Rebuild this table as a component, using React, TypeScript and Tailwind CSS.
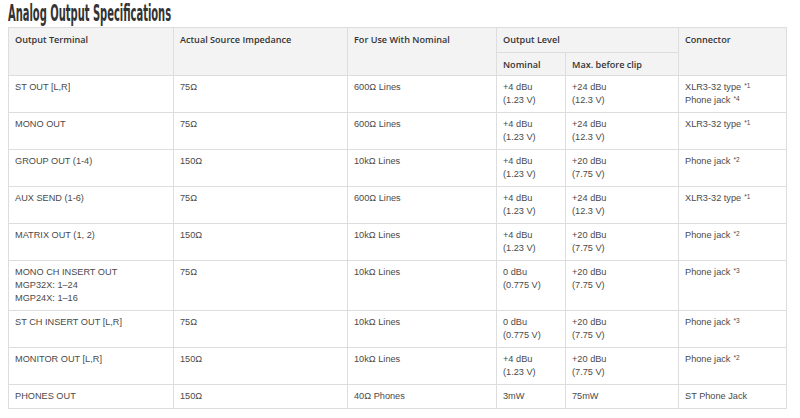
const rows = [
  { term: ["ST OUT [L,R]"], imp: "75Ω", use: "600Ω Lines", nom: ["+4 dBu", "(1.23 V)"], max: ["+24 dBu", "(12.3 V)"], conn: [["XLR3-32 type", "*1"], ["Phone jack", "*4"]] },
  { term: ["MONO OUT"], imp: "75Ω", use: "600Ω Lines", nom: ["+4 dBu", "(1.23 V)"], max: ["+24 dBu", "(12.3 V)"], conn: [["XLR3-32 type", "*1"]] },
  { term: ["GROUP OUT (1-4)"], imp: "150Ω", use: "10kΩ Lines", nom: ["+4 dBu", "(1.23 V)"], max: ["+20 dBu", "(7.75 V)"], conn: [["Phone jack", "*2"]] },
  { term: ["AUX SEND (1-6)"], imp: "75Ω", use: "600Ω Lines", nom: ["+4 dBu", "(1.23 V)"], max: ["+24 dBu", "(12.3 V)"], conn: [["XLR3-32 type", "*1"]] },
  { term: ["MATRIX OUT (1, 2)"], imp: "150Ω", use: "10kΩ Lines", nom: ["+4 dBu", "(1.23 V)"], max: ["+20 dBu", "(7.75 V)"], conn: [["Phone jack", "*2"]] },
  { term: ["MONO CH INSERT OUT", "MGP32X: 1–24", "MGP24X: 1–16"], imp: "75Ω", use: "10kΩ Lines", nom: ["0 dBu", "(0.775 V)"], max: ["+20 dBu", "(7.75 V)"], conn: [["Phone jack", "*3"]] },
  { term: ["ST CH INSERT OUT [L,R]"], imp: "75Ω", use: "10kΩ Lines", nom: ["0 dBu", "(0.775 V)"], max: ["+20 dBu", "(7.75 V)"], conn: [["Phone jack", "*3"]] },
  { term: ["MONITOR OUT [L,R]"], imp: "150Ω", use: "10kΩ Lines", nom: ["+4 dBu", "(1.23 V)"], max: ["+20 dBu", "(7.75 V)"], conn: [["Phone jack", "*2"]] },
  { term: ["PHONES OUT"], imp: "150Ω", use: "40Ω Phones", nom: ["3mW"], max: ["75mW"], conn: [["ST Phone Jack", ""]] },
];

const th = "border border-[#dddddd] bg-[#f3f3f3] px-[6px] pt-[5px] pb-[4px] text-left align-top font-semibold text-[9.1px] leading-[13px] text-[#333333]";
const td = "border border-[#dddddd] px-[6px] pt-[5px] pb-[5px] align-top";

const Lines = ({ items }: { items: string[] }) => (
  <>
    {items.map((t, i) => (
      <div key={i}>{t}</div>
    ))}
  </>
);

export default function App() {
  return (
    <div className="w-[800px] h-[418px] bg-white overflow-hidden">
      <div className="pl-[8px] h-[27px]">
        <h2 className="origin-left scale-x-[0.48] whitespace-nowrap font-bold text-[23px] leading-[26px] text-[#333333] font-['DejaVu_Sans_Condensed','Liberation_Sans_Narrow',sans-serif]">
          Analog Output Specifications
        </h2>
      </div>
      <table className="ml-[8px] w-[778px] table-fixed border-collapse text-[9.2px] leading-[13px] text-[#4a4a4a] font-['Liberation_Sans',Arial,sans-serif]">
        <colgroup>
          <col className="w-[165px]" />
          <col className="w-[174px]" />
          <col className="w-[149px]" />
          <col className="w-[69px]" />
          <col className="w-[113px]" />
          <col className="w-[108px]" />
        </colgroup>
        <thead className="font-['Open_Sans',sans-serif]">
          <tr className="h-[25px]">
            <th rowSpan={2} className={th}>Output Terminal</th>
            <th rowSpan={2} className={th}>Actual Source Impedance</th>
            <th rowSpan={2} className={th}>For Use With Nominal</th>
            <th colSpan={2} className={th}>Output Level</th>
            <th rowSpan={2} className={th}>Connector</th>
          </tr>
          <tr className="h-[23px]">
            <th className={th}>Nominal</th>
            <th className={th}>Max. before clip</th>
          </tr>
        </thead>
        <tbody>
          {rows.map((r, i) => (
            <tr key={i}>
              <td className={td}><Lines items={r.term} /></td>
              <td className={td}>{r.imp}</td>
              <td className={td}>{r.use}</td>
              <td className={td}><Lines items={r.nom} /></td>
              <td className={td}><Lines items={r.max} /></td>
              <td className={td}>
                {r.conn.map(([label, note], j) => (
                  <div key={j}>
                    {label}
                    {note && (
                      <sup className="ml-[3px] text-[6.5px] relative -top-[2px]">{note}</sup>
                    )}
                  </div>
                ))}
              </td>
            </tr>
          ))}
        </tbody>
      </table>
    </div>
  );
}
